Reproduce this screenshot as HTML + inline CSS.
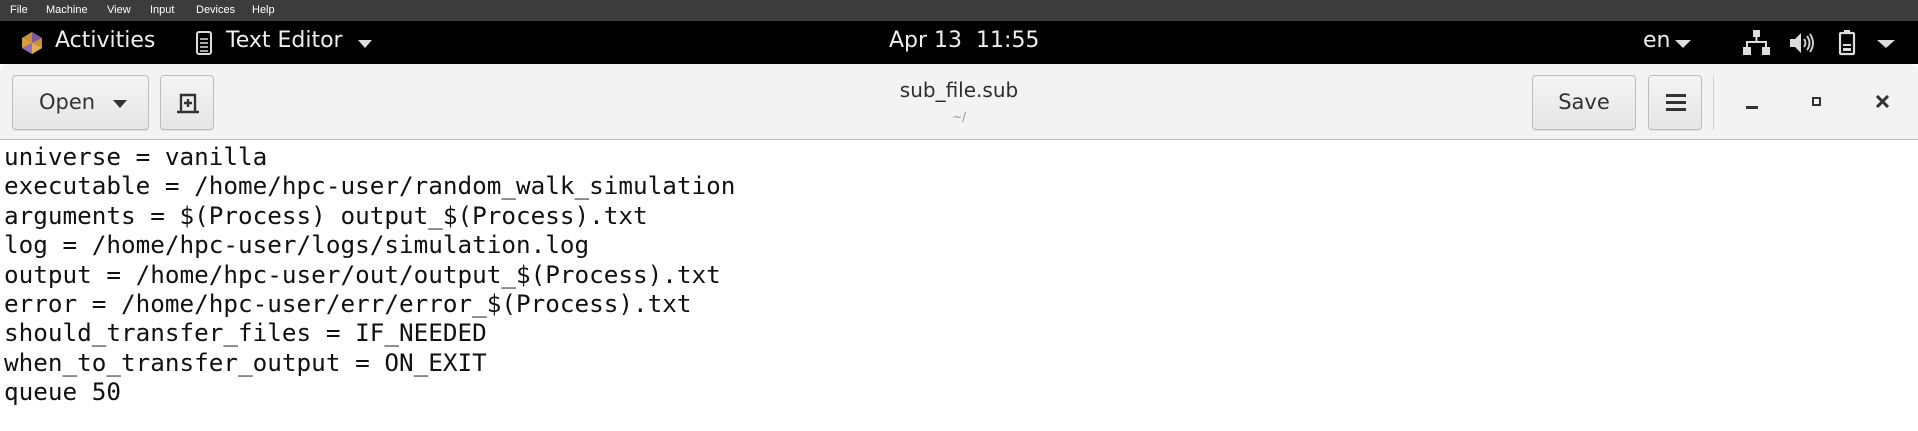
<!DOCTYPE html><html><head><style>
*{margin:0;padding:0;box-sizing:border-box}
body{width:1918px;height:431px;overflow:hidden;background:#fff;font-family:"Liberation Sans",sans-serif;position:relative}
.a{position:absolute}
#mb{left:0;top:0;width:1918px;height:21px;background:#3c3c3c;color:#fff;font-size:11px}
#mb span{position:absolute;top:4px}
#tb{left:0;top:21px;width:1918px;height:43px;background:#000;color:#eee;font-size:22px;font-family:"DejaVu Sans",sans-serif}
#hb{left:0;top:64px;width:1918px;height:76px;background:#f3f3f3;border-bottom:1px solid #b8b8b8;border-radius:8px 8px 0 0;font-family:"DejaVu Sans",sans-serif}
.btn{position:absolute;top:11px;height:55px;border:1px solid #bdbdbd;border-radius:4px;background:linear-gradient(#f4f4f4,#e6e6e6);box-shadow:0 1px 0 #ddd;color:#333;font-size:21px;text-align:center;line-height:53px}
#txt{left:4px;top:142px;font-family:"DejaVu Sans Mono","Liberation Mono",monospace;font-size:24.3px;line-height:29.4px;color:#111;white-space:pre}
</style></head><body>
<div id="mb" class="a"><span style="left:10px">File</span><span style="left:46px">Machine</span><span style="left:107px">View</span><span style="left:150px">Input</span><span style="left:196px">Devices</span><span style="left:252px">Help</span></div>
<div id="tb" class="a">
<svg class="a" style="left:20px;top:10px" width="24" height="24" viewBox="0 0 24 24"><polygon points="12,1 22,7 22,17 12,23 2,17 2,7" fill="#c8903c"/><polygon points="12,1 22,7 12,12" fill="#7a5aa0"/><polygon points="2,7 12,12 2,17" fill="#d6a040"/><polygon points="12,12 22,17 12,23" fill="#e0b050"/><polygon points="12,12 2,17 12,23" fill="#9070b0"/></svg>
<span class="a" style="left:55px;top:7px">Activities</span>
<svg class="a" style="left:195px;top:9px" width="18" height="26" viewBox="0 0 18 26"><rect x="2" y="2" width="14" height="22" rx="2" fill="none" stroke="#ddd" stroke-width="2"/><path d="M5 9h8M5 13h8M5 17h8M5 21h8" stroke="#ddd" stroke-width="1.5"/></svg>
<span class="a" style="left:226px;top:7px">Text Editor</span>
<svg class="a" style="left:358px;top:19px" width="14" height="8"><polygon points="0,0 14,0 7,8" fill="#ddd"/></svg>
<span class="a" style="left:889px;top:7px">Apr 13&nbsp; 11:55</span>
<span class="a" style="left:1643px;top:7px">en</span>
<svg class="a" style="left:1675px;top:19px" width="16" height="8"><polygon points="0,0 16,0 8,8" fill="#ddd"/></svg>
<svg class="a" style="left:1743px;top:9px" width="27" height="25" viewBox="0 0 27 25" fill="#ddd"><rect x="10" y="0" width="7" height="7"/><rect x="12.5" y="7" width="2" height="5"/><rect x="3" y="11" width="21" height="2"/><rect x="3" y="11" width="2" height="6"/><rect x="22" y="11" width="2" height="6"/><rect x="0" y="17" width="8" height="8"/><rect x="19" y="17" width="8" height="8"/></svg>
<svg class="a" style="left:1790px;top:11px" width="26" height="22" viewBox="0 0 26 22"><polygon points="0,7 5,7 11,1 11,21 5,15 0,15" fill="#ddd"/><path d="M14 7q3 4 0 8M17 4q5 7 0 14M20 2q6 9 0 18" stroke="#ccc" stroke-width="2" fill="none"/></svg>
<svg class="a" style="left:1838px;top:8px" width="18" height="27" viewBox="0 0 18 27"><rect x="6" y="1" width="6" height="3" fill="#ddd"/><rect x="2" y="4" width="14" height="21" rx="1" fill="none" stroke="#ddd" stroke-width="2.2"/><rect x="5" y="15" width="8" height="2" fill="#ddd"/><rect x="5" y="19" width="8" height="3" fill="#ddd"/></svg>
<svg class="a" style="left:1877px;top:19px" width="18" height="8"><polygon points="0,0 18,0 9,8" fill="#ddd"/></svg>
</div>
<div id="hb" class="a">
<div class="btn" style="left:12px;width:137px;text-align:left;padding-left:26px">Open<svg style="position:absolute;left:100px;top:24px" width="14" height="8"><polygon points="0,0 14,0 7,8" fill="#333"/></svg></div>
<div class="btn" style="left:160px;width:54px"><svg style="position:absolute;left:15px;top:15px" width="24" height="24" viewBox="0 0 24 24" fill="none" stroke="#333" stroke-width="2.4"><path d="M5 20V4h14v16M1 21h22M8 12h8M12 8v8"/></svg></div>
<div class="a" style="left:0;width:1918px;top:14px;text-align:center;font-size:20px;color:#2e2e2e">sub_file.sub</div>
<div class="a" style="left:0;width:1918px;top:46px;text-align:center;font-size:12px;color:#999">~/</div>
<div class="btn" style="left:1532px;width:104px">Save</div>
<div class="btn" style="left:1648px;width:54px"><svg style="position:absolute;left:17px;top:17px" width="20" height="18" fill="#333"><rect y="1" width="20" height="3"/><rect y="8" width="20" height="3"/><rect y="15" width="20" height="3"/></svg></div>
<div class="a" style="left:1713px;top:11px;width:1px;height:55px;background:#d0d0d0"></div>
<div class="a" style="left:1746px;top:42px;width:12px;height:3px;background:#333"></div>
<div class="a" style="left:1812px;top:33px;width:9px;height:9px;border:2.5px solid #333"></div>
<svg class="a" style="left:1876px;top:31px" width="13" height="13"><path d="M1 1L12 12M12 1L1 12" stroke="#333" stroke-width="3"/></svg>
</div>
<div id="txt" class="a">universe = vanilla
executable = /home/hpc-user/random_walk_simulation
arguments = $(Process) output_$(Process).txt
log = /home/hpc-user/logs/simulation.log
output = /home/hpc-user/out/output_$(Process).txt
error = /home/hpc-user/err/error_$(Process).txt
should_transfer_files = IF_NEEDED
when_to_transfer_output = ON_EXIT
queue 50</div>
</body></html>
